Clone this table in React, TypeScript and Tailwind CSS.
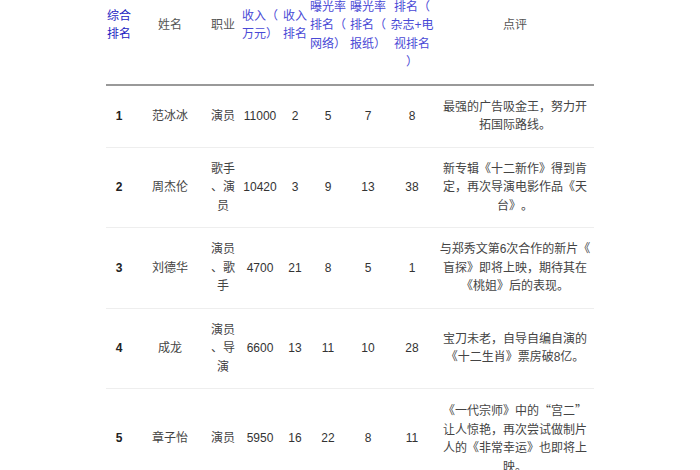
const rows = [
  { rank: 1, name: "范冰冰", job: "演员", income: "11000", incRank: "2", net: "5", paper: "7", tv: "8", note: <>最强的广告吸金王，努力开拓国际路线。</> },
  { rank: 2, name: "周杰伦", job: "歌手、演员", income: "10420", incRank: "3", net: "9", paper: "13", tv: "38", note: <>新专辑《十二新作》得到肯定，再次导演电影作品《天台》。</> },
  { rank: 3, name: "刘德华", job: "演员、歌手", income: "4700", incRank: "21", net: "8", paper: "5", tv: "1", note: <>与郑秀文第6次合作的新片《盲探》即将上映，期待其在《桃姐》后的表现。</> },
  { rank: 4, name: "成龙", job: "演员、导演", income: "6600", incRank: "13", net: "11", paper: "10", tv: "28", note: <>宝刀未老，自导自编自演的《十二生肖》票房破8亿。</> },
  {
    rank: 5, name: "章子怡", job: "演员", income: "5950", incRank: "16", net: "22", paper: "8", tv: "11",
    note: (
      <>
        《一代宗师》中的
        <span className="font-['Noto_Sans_CJK_SC',sans-serif] [font-feature-settings:'fwid']">“</span>宫二
        <span className="font-['Noto_Sans_CJK_SC',sans-serif] [font-feature-settings:'fwid']">”</span>
        让人惊艳，再次尝试做制片人的《非常幸运》也即将上映。
      </>
    ),
  },
];

const th = "py-3 px-0 align-middle text-center font-normal border-b-2 border-[#999]";
const td = "py-3 px-0 align-middle text-center border-b border-[#eee]";

export default function App() {
  return (
    <div className="h-[470px] w-[700px] overflow-hidden bg-white font-['Liberation_Sans','Noto_Sans_CJK_SC',sans-serif] text-[12px] leading-[18.5px] text-[#444] [line-break:anywhere] [text-spacing-trim:space-all]">
      <table className="mx-auto mt-[-33px] w-[488px] table-fixed border-collapse">
        <colgroup>
          <col className="w-[26px]" />
          <col className="w-[76px]" />
          <col className="w-[30px]" />
          <col className="w-[44px]" />
          <col className="w-[26px]" />
          <col className="w-[40px]" />
          <col className="w-[40px]" />
          <col className="w-[48px]" />
          <col className="w-[158px]" />
        </colgroup>
        <thead>
          <tr>
            <th className={`${th} text-[#2323c2] font-bold`}>综合排名</th>
            <th className={`${th} text-[#555]`}>姓名</th>
            <th className={`${th} text-[#555]`}>职业</th>
            <th className={`${th} text-[#4a4ad6]`}>收入（万元）</th>
            <th className={`${th} text-[#4a4ad6]`}>收入排名</th>
            <th className={`${th} text-[#4a4ad6]`}>曝光率排名（网络）</th>
            <th className={`${th} text-[#4a4ad6]`}>曝光率排名（报纸）</th>
            <th className={`${th} px-[2px] text-[#4a4ad6]`}>曝光率排名（杂志+电视排名）</th>
            <th className={`${th} text-[#555]`}>点评</th>
          </tr>
        </thead>
        <tbody>
          {rows.map((r) => (
            <tr key={r.rank}>
              <td className={`${td} font-bold text-[#222]`}>{r.rank}</td>
              <td className={td}>{r.name}</td>
              <td className={td}>{r.job}</td>
              <td className={`${td} text-[#333]`}>{r.income}</td>
              <td className={`${td} text-[#333]`}>{r.incRank}</td>
              <td className={`${td} text-[#333]`}>{r.net}</td>
              <td className={`${td} text-[#333]`}>{r.paper}</td>
              <td className={`${td} text-[#333]`}>{r.tv}</td>
              <td className={`${td} px-[2px]`}>{r.note}</td>
            </tr>
          ))}
        </tbody>
      </table>
    </div>
  );
}
